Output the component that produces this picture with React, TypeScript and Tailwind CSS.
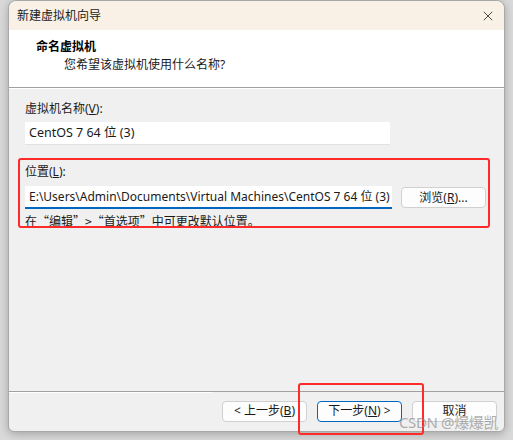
import { X } from "lucide-react";

const cjk = "font-['Segoe_UI','Noto_Sans','Noto_Sans_CJK_SC',sans-serif]";

const Btn = ({ label, primary }: { label: React.ReactNode; primary?: boolean }) => (
  <button
    className={`h-[21px] w-[85px] rounded-[4px] text-[12px] text-[#1a1a1a] leading-none ${
      primary ? "border border-[#0067c0] bg-[#fdfdfd]" : "border border-[#d0d0d0] bg-[#fdfdfd]"
    }`}
  >
    {label}
  </button>
);

const App = () => {
  return (
    <div className={`w-[513px] h-[440px] bg-[#d9d9d9] pl-[8px] pr-[8px] pb-[8px] ${cjk}`}>
      <div className="relative w-[497px] h-[432px] flex flex-col bg-[#f0f0f0] border border-[#a8a8a8] rounded-t-[8px] rounded-b-[6px] shadow-[0_2px_8px_rgba(0,0,0,0.25)]">
        {/* title bar */}
        <div className="h-[29px] flex items-center justify-between bg-[#f9f1e5] rounded-t-[8px] pl-[8px] pr-[8px]">
          <span className="text-[12px] text-[#1a1a1a]">新建虚拟机向导</span>
          <X size={16} strokeWidth={1.2} className="text-[#222]" />
        </div>

        {/* header */}
        <div className="h-[58px] bg-white pl-[27px] pt-[8px] border-b border-[#a0a0a0]">
          <div className="text-[12px] font-bold text-black leading-[18px]">命名虚拟机</div>
          <div className="text-[12px] text-[#1a1a1a] leading-[18px] pl-[28px]">您希望该虚拟机使用什么名称?</div>
        </div>

        {/* body */}
        <div className="flex-1 border-t border-white pl-[16px] pr-[16px] pt-[11px]">
          <div className="text-[12px] text-[#1a1a1a] leading-[18px]">
            虚拟机名称(<span className="underline">V</span>):
          </div>
          <div className="mt-[4px] w-[365px] h-[23px] bg-white border-b border-[#e2e2e2] pl-[4px] flex items-center text-[12.5px] text-[#1a1a1a]">
            CentOS 7 64 位 (3)
          </div>

          <div className="mt-[18px] text-[12px] text-[#1a1a1a] leading-[18px]">
            位置(<span className="underline">L</span>):
          </div>
          <div className="mt-[5px] flex items-center gap-[9px]">
            <div className="w-[367px] h-[23px] bg-white border-b-2 border-[#0067c0] pl-[4px] flex items-center text-[12px] text-[#1a1a1a] whitespace-nowrap overflow-hidden">
              E:\Users\Admin\Documents\Virtual Machines\CentOS 7 64 位 (3)
            </div>
            <Btn label={<>浏览(<span className="underline">R</span>)...</>} />
          </div>
          <div className="mt-[3px] text-[12px] text-[#1a1a1a] leading-[18px] font-['Noto_Sans_CJK_SC',sans-serif]">
            在“编辑”&gt;“首选项”中可更改默认位置。
          </div>
        </div>

        {/* footer */}
        <div className="h-[40px] border-t border-[#a0a0a0] flex items-center justify-end gap-[10px] pr-[7px] pb-[1px]">
          <div className="flex-1 self-start border-t border-white" />
          <Btn label={<>&lt; 上一步(<span className="underline">B</span>)</>} />
          <Btn primary label={<>下一步(<span className="underline">N</span>) &gt;</>} />
          <Btn label="取消" />
        </div>

        {/* annotations */}
        <div className="absolute left-[9px] top-[157px] w-[472px] h-[70px] border-[2px] border-[#ff2b2b] rounded-[3px]" />
        <div className="absolute left-[289px] top-[382px] w-[126px] h-[52px] border-[2px] border-[#ff2b2b] rounded-[3px]" />
        <div className="absolute left-[390px] top-[410px] text-[15px] text-[#8c8c8c]/70 tracking-tight">
          CSDN @爆爆凯
        </div>
      </div>
    </div>
  );
};

export default App;
